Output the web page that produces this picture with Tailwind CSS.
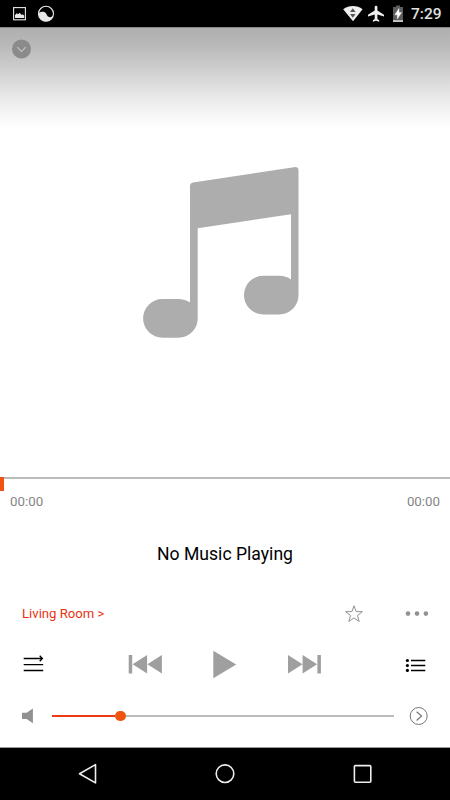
<!DOCTYPE html>
<html lang="en">
<head>
<meta charset="utf-8">
<title>Music player</title>
<script src="https://cdn.jsdelivr.net/npm/@tailwindcss/browser@4"></script>
</head>
<body class="bg-white">
<div class="flex h-[800px] w-[450px] flex-col overflow-hidden bg-white font-['Roboto',sans-serif]">
  <header class="flex h-[27px] shrink-0 items-center bg-black pr-[9px] pl-3">
    <svg class="h-[27px] w-[16px]" viewBox="12 0 16 27" fill="none">
      <rect x="13.6" y="7.6" width="11.8" height="12.2" stroke="#e8e8e8" stroke-width="1.1"/>
      <path d="M15 18v-3l1.8-1.7 1.2.9 1.7-1.4 1.6 2 1.8-.2 1.1 1.2V18z" fill="#e8e8e8"/>
    </svg>
    <svg class="ml-[9px] h-[27px] w-[18px]" viewBox="37 0 18 27" fill="none">
      <circle cx="46" cy="13.8" r="7.5" stroke="#e8e8e8" stroke-width="1.1"/>
      <path d="M38.500 13.500C40 11.300 44.800 10.900 46.100 13.600C47.200 16 48 17.300 50 17.200C51.500 17.100 52.500 16.300 53.300 15.300C52.500 19 49.600 21.300 46 21.300C41.800 21.300 38.400 17.800 38.500 13.500z" fill="#e8e8e8"/>
    </svg>
    <svg class="ml-auto h-[27px] w-[20px]" viewBox="343 0 20 27">
      <path d="M343.2 9.2C349 5 357 5 362.6 9.2L353 21.2z" fill="#eee"/>
      <path d="M350 12.1l2.8-3.8 2.8 3.8zM350 14h5.600l-2.8 3.700z" fill="#555"/>
    </svg>
    <svg class="ml-[5px] h-[27px] w-[16px]" viewBox="368 0 16 27">
      <path transform="translate(0 .6)" d="M384 15.8v-1.7l-6.6-4.2V6.5c0-1.7-2.7-1.700-2.700 0v3.4l-6.700 4.200v1.700l6.700-2v4.600l-1.800 1.300v1.400l3.100-.9 3.200.9v-1.400l-1.800-1.300v-4.600z" fill="#eee"/>
    </svg>
    <svg class="ml-[9px] h-[27px] w-[10px]" viewBox="393 0 10 27">
      <path d="M393 7h3V5.500h4V7h3v14.500h-10z" fill="#5d5d5d"/>
      <path d="M393 20.300h10v1.600h-10z" fill="#ddd"/>
      <path d="M399 8.500l-4.200 6.300h2.500v4.300l4.200-6.500h-2.500z" fill="#fff" stroke="#fff" stroke-width=".4"/>
    </svg>
    <span class="ml-[8px] w-[30px] text-[15.5px] leading-[27px] font-medium whitespace-nowrap text-[#e0e0e0]"><span class="relative top-px">7:29</span></span>
  </header>

  <section class="flex h-[450px] shrink-0 flex-col bg-[linear-gradient(#858585_0px,#858585_1px,#afafaf_1px,#b8b8b8_17px,#cecece_42px,#e9e9e9_70px,#fff_101px)]">
    <button class="mt-[12px] ml-[12px] h-[20px] w-[20px]" aria-label="Collapse">
      <svg class="block h-[20px] w-[20px]" viewBox="12 39 20 20" fill="none"><circle cx="21.5" cy="49" r="9.5" fill="#8b8b8b"/><path d="M17.3 47.2l4.2 4.3 4.2-4.3" stroke="#c3c3c3" stroke-width="1.1"/></svg>
    </button>
    <svg class="mt-[107px] ml-[142px] h-[174px] w-[158px]" viewBox="142 166 158 174" fill="#adadad">
      <path fill-rule="evenodd" d="M190 186q0-3 3-3.500L294 167.200Q298.500 166.500 298.500 170.500V295.200A19.200 19.200 0 0 1 279.300 314.400H263.300A19.200 19.200 0 0 1 263.300 275.700H279.300Q286 275.700 291 279.400V214.200L197.700 228.300V318.400A19.200 19.200 0 0 1 178.500 337.800H162.500A19.300 19.300 0 0 1 162.500 299H178.500Q185 299 190 302.500z"/>
    </svg>
  </section>

  <div class="h-[14px] shrink-0 border-t-2 border-[#bcbcbc]"><div class="-mt-[2px] h-[14px] w-[4px] bg-[#f0530f]"></div></div>
  <div class="flex h-[20px] shrink-0 justify-between px-[10px] text-[13.3px] leading-[21px] text-[#858585]"><span>00:00</span><span>00:00</span></div>
  <h1 class="h-[84px] shrink-0 text-center text-[17.6px] leading-[87px] text-black">No Music Playing</h1>

  <div class="flex h-[38px] shrink-0 items-center pr-[21px] pl-[22px]">
    <a class="text-[13.15px] leading-[38px] text-[#e63212]">Living Room &gt;</a>
    <svg class="ml-auto h-[38px] w-[20px]" viewBox="344 595 20 38" fill="none" stroke="#929292"><path d="M354 605.700l2.100 5.900 6.300.1-5 3.800 1.800 6-5.200-3.600-5.200 3.600 1.800-6-5-3.800 6.300-.1z"/></svg>
    <svg class="ml-[41px] h-[38px] w-[24px]" viewBox="405 595 24 38" fill="#929292"><circle cx="408" cy="613.600" r="2.300"/><circle cx="417" cy="613.600" r="2.300"/><circle cx="425.900" cy="613.600" r="2.300"/></svg>
  </div>

  <div class="flex h-[62px] shrink-0 items-center pr-[24px] pl-[23px]">
    <svg class="h-[62px] w-[22px]" viewBox="23 633 22 62" fill="none" stroke="#000" stroke-width="1.300"><path d="M23.700 658.500H42M23.700 664.700h19.500M23.700 670.500h19.500M39.700 655.800l2.700 2.700-2.700 2.700"/></svg>
    <svg class="ml-[83px] h-[62px] w-[34px]" viewBox="128 633 34 62" fill="#9f9f9f"><path d="M128.700 655h3.500v18.400h-3.500zM147.100 655v18.400l-14.500-9.200zM161.900 655v18.400l-14.500-9.200z"/></svg>
    <svg class="ml-[51px] h-[62px] w-[24px]" viewBox="213 633 24 62" fill="#9f9f9f"><path d="M213.300 650.800v27.400l22.900-13.700z"/></svg>
    <svg class="ml-[50px] h-[62px] w-[35px]" viewBox="287 633 35 62" fill="#9f9f9f"><path d="M288 655v18.400l14.500-9.200zM302.600 655v18.400l14.500-9.200zM317.400 655h3.500v18.400h-3.500z"/></svg>
    <svg class="ml-auto h-[62px] w-[21px]" viewBox="405 633 21 62" stroke="#000" stroke-width="1.300"><path d="M411 660.500h14.300M411 665.500h14.300M411 670.500h14.300"/><g stroke="none"><circle cx="407.400" cy="660.500" r="1.600"/><circle cx="407.400" cy="665.500" r="1.600"/><circle cx="407.400" cy="670.400" r="1.600"/></g></svg>
  </div>

  <div class="flex h-[42px] shrink-0 items-center pr-[21px] pl-[21px]">
    <svg class="h-[42px] w-[13px]" viewBox="21 695 13 42" fill="#919191"><path d="M22 712.700h4.600l6.300-4.200v14.800l-6.300-4.200H22z"/></svg>
    <div class="ml-[18px] flex w-[342px] items-center">
      <div class="h-[2px] w-[63px] bg-[#ee3b16]"></div>
      <div class="h-[10.600px] w-[10.600px] rounded-full bg-[#f0530f]"></div>
      <div class="h-[2px] flex-1 bg-[#bcbcbc]"></div>
    </div>
    <svg class="ml-auto h-[42px] w-[20px]" viewBox="409 695 20 42" fill="none" stroke="#777"><circle cx="418.700" cy="716" r="8.500"/><path d="M416.600 711.700l5 4.300-5 4.500" stroke-width="1.200"/></svg>
  </div>

  <nav class="mt-auto flex h-[53px] shrink-0 items-center border-t border-[#999] bg-black pl-[77px]">
    <svg class="h-[52px] w-[21px]" viewBox="77 748 21 52" fill="none" stroke="#eee" stroke-width="1.600"><path d="M95.500 764.600v18.300l-16-9.200z" stroke-linejoin="round"/></svg>
    <svg class="ml-[116px] h-[52px] w-[22px]" viewBox="214 748 22 52" fill="none" stroke="#eee" stroke-width="1.600"><circle cx="225" cy="773.700" r="8.800"/></svg>
    <svg class="ml-[117px] h-[52px] w-[20px]" viewBox="353 748 20 52" fill="none" stroke="#eee" stroke-width="1.600"><rect x="354.400" y="765.600" width="16.400" height="16.600" rx="1"/></svg>
  </nav>
</div>
</body>
</html>
